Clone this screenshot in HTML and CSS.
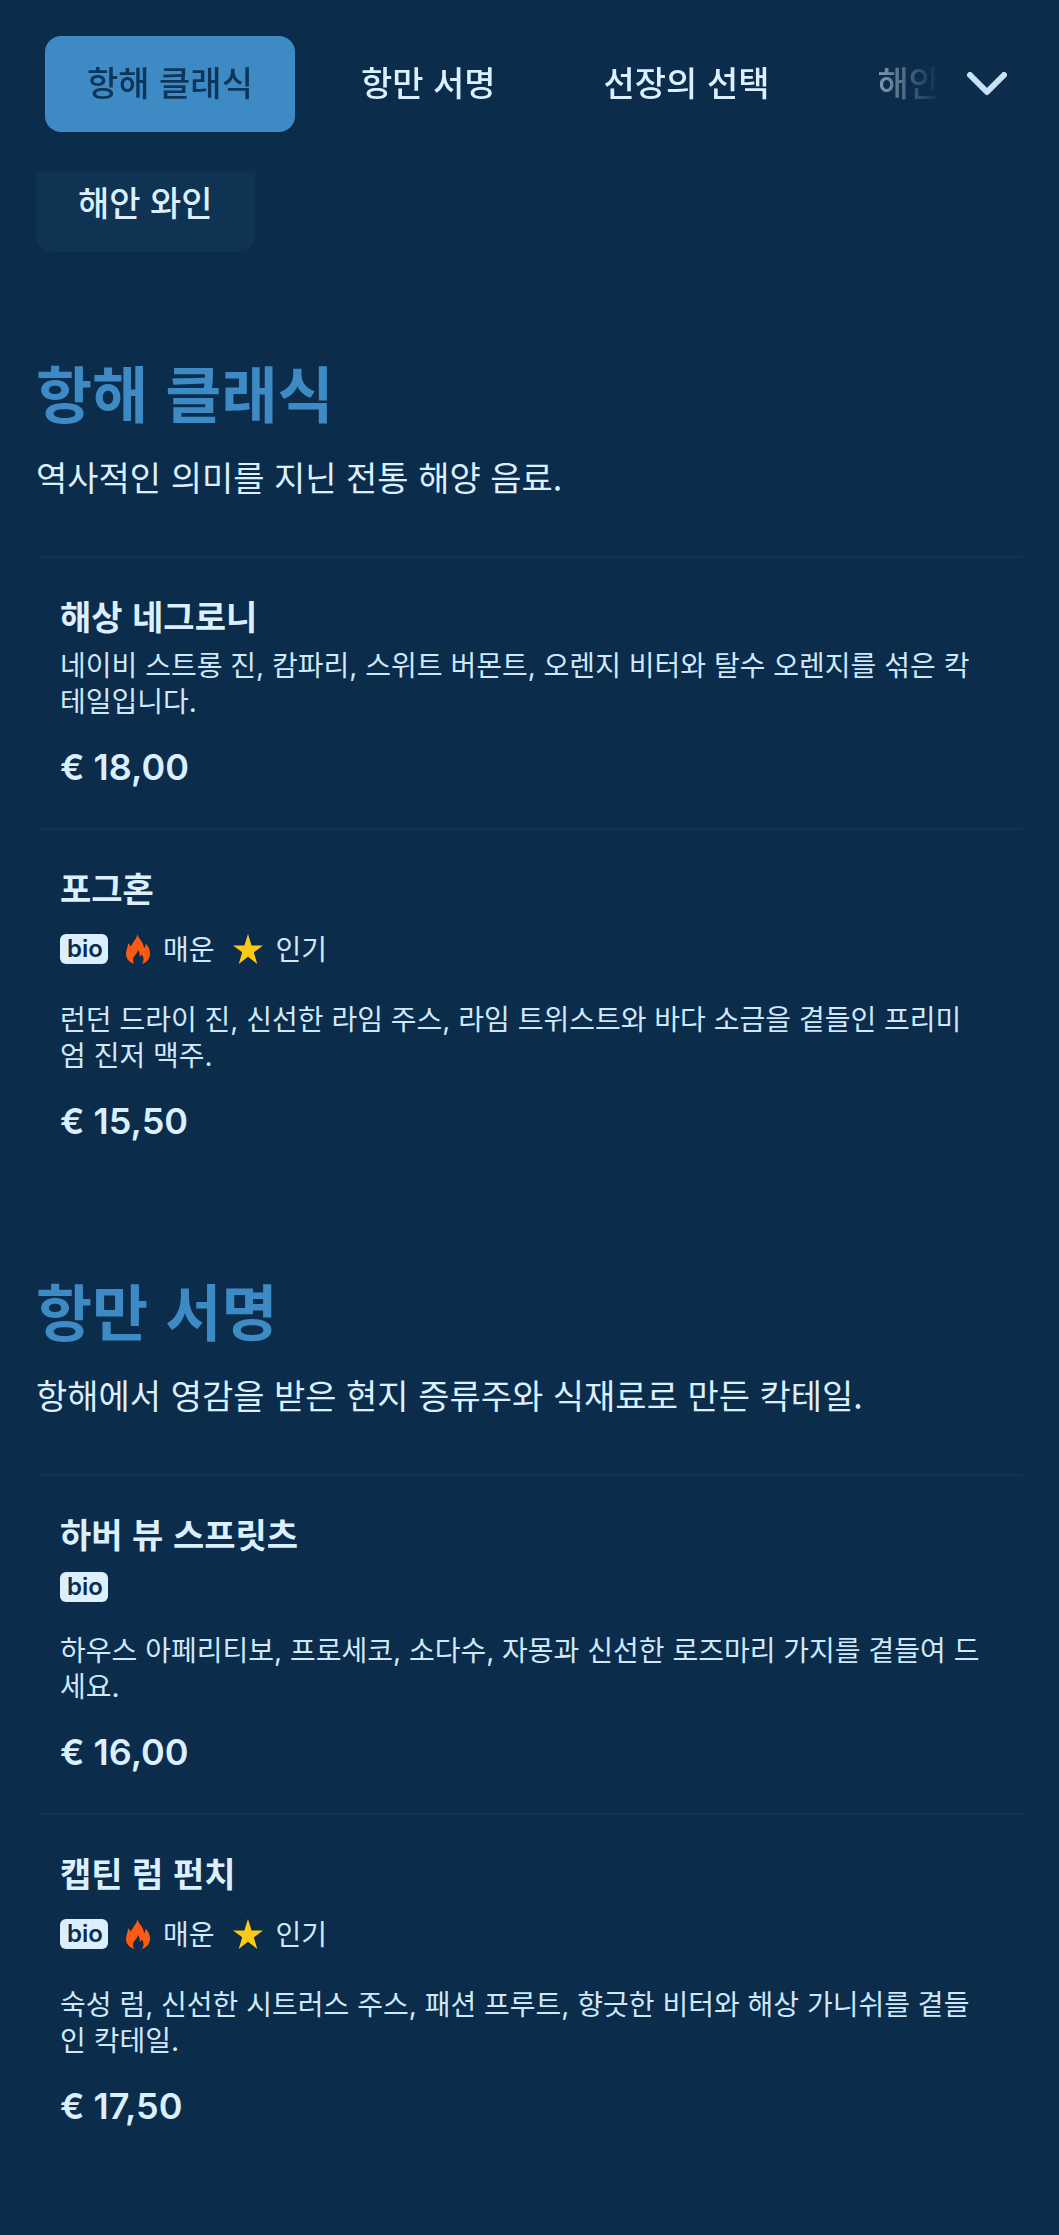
FILE: index.html
```
<!DOCTYPE html>
<html lang="ko">
<head>
    <meta charset="UTF-8">
    <meta name="viewport" content="width=device-width, initial-scale=1.0">
    <title>음료 메뉴</title>
    <link rel="stylesheet" href="styles.css">
</head>
<body>

    <!-- Icons used by the labels -->
    <svg class="sprite" aria-hidden="true">
        <symbol id="fire" viewBox="0 0 24 30">
            <path d="M11.5 0C12.5 5 17.5 7.5 18 14C19.3 13.2 19.8 11.3 19.6 9.5C22.5 12.5 24 16 24 19.5C24 24.5 21 28.5 16 30C18.3 26.5 18 23 15.5 20.5C15 22 14.5 22.6 13.6 22.8C14 20.5 13.5 18 12 16C11.5 20 7 22 7 25.5C7 27.5 7.5 29 8.5 30C3.5 28.5 0 25 0 20C0 16 2 13.5 2 9.5C3.6 10.5 4.5 11.5 4.8 13C6 8.5 10.5 6 11.5 0Z"/>
        </symbol>
        <symbol id="star" viewBox="0 0 30 30">
            <path d="M15 0L18.6 11.4L30 11.4L20.8 18.3L24.3 30L15 22.8L5.7 30L9.2 18.3L0 11.4L11.4 11.4Z"/>
        </symbol>
    </svg>

    <header class="header">
        <nav class="tabs">
            <a class="tab active" href="#classics">항해 클래식</a>
            <a class="tab" href="#signatures">항만 서명</a>
            <a class="tab" href="#captain">선장의 선택</a>
            <a class="tab" href="#wines">해안 와인</a>
        </nav>
        <button class="toggle" type="button" aria-label="모든 카테고리">
            <svg class="chevron" viewBox="0 0 40 24"><path d="M3 3L20 20L37 3"/></svg>
        </button>
    </header>

    <main class="menu">
        <div class="categories">
            <a class="category" href="#wines">해안 와인</a>
        </div>

        <section class="section" id="classics">
            <h2>항해 클래식</h2>
            <p class="intro">역사적인 의미를 지닌 전통 해양 음료.</p>

            <article class="item">
                <h3>해상 네그로니</h3>
                <p class="description">네이비 스트롱 진, 캄파리, 스위트 버몬트, 오렌지 비터와 탈수 오렌지를 섞은 칵테일입니다.</p>
                <p class="price">€ 18,00</p>
            </article>

            <article class="item">
                <h3>포그혼</h3>
                <div class="labels">
                    <span class="bio">bio</span>
                    <span class="label"><svg class="fire"><use href="#fire"/></svg>매운</span>
                    <span class="label"><svg class="star"><use href="#star"/></svg>인기</span>
                </div>
                <p class="description">런던 드라이 진, 신선한 라임 주스, 라임 트위스트와 바다 소금을 곁들인 프리미엄 진저 맥주.</p>
                <p class="price">€ 15,50</p>
            </article>
        </section>

        <section class="section" id="signatures">
            <h2>항만 서명</h2>
            <p class="intro">항해에서 영감을 받은 현지 증류주와 식재료로 만든 칵테일.</p>

            <article class="item">
                <h3>하버 뷰 스프릿츠</h3>
                <div class="labels">
                    <span class="bio">bio</span>
                </div>
                <p class="description">하우스 아페리티보, 프로세코, 소다수, 자몽과 신선한 로즈마리 가지를 곁들여 드세요.</p>
                <p class="price">€ 16,00</p>
            </article>

            <article class="item">
                <h3>캡틴 럼 펀치</h3>
                <div class="labels">
                    <span class="bio">bio</span>
                    <span class="label"><svg class="fire"><use href="#fire"/></svg>매운</span>
                    <span class="label"><svg class="star"><use href="#star"/></svg>인기</span>
                </div>
                <p class="description">숙성 럼, 신선한 시트러스 주스, 패션 프루트, 향긋한 비터와 해상 가니쉬를 곁들인 칵테일.</p>
                <p class="price">€ 17,50</p>
            </article>
        </section>
    </main>
</body>
</html>
```
FILE: styles.css
```
* {
    box-sizing: border-box;
}

body {
    margin: 0;
    background-color: #0b2c4a;
    color: #dbefff;
    font-family: "Noto Sans CJK KR", sans-serif;
}

h2,
h3,
p {
    margin: 0;
}

a {
    color: inherit;
    text-decoration: none;
}

.sprite {
    display: none;
}

/* Sticky category bar */
.header {
    position: sticky;
    top: 0;
    z-index: 1;
    display: flex;
    align-items: flex-start;
    padding: 36px 45px 38px;
    background-color: #0b2c4a;
    border-bottom: 2px solid #0e304f;
}

.tabs {
    display: flex;
    flex: 1;
    gap: 24px;
    min-width: 0;
    overflow: hidden;
    -webkit-mask-image: linear-gradient(to right, #000 calc(100% - 110px), transparent);
    mask-image: linear-gradient(to right, #000 calc(100% - 110px), transparent);
}

.tab,
.category {
    flex: none;
    padding: 21px 42px 25px;
    border-radius: 16px;
    font-size: 34px;
    font-weight: 500;
    line-height: 50px;
}

.tab.active {
    background-color: #3d8ac5;
    color: #0b3659;
}

.toggle {
    display: flex;
    align-items: center;
    height: 96px;
    margin-left: 20px;
    padding: 0 7px;
    border: none;
    background: none;
    cursor: pointer;
}

.chevron {
    width: 40px;
    height: 24px;
    fill: none;
    stroke: #c9e2f8;
    stroke-width: 6;
    stroke-linecap: round;
    stroke-linejoin: round;
}

.menu {
    padding: 0 36px 68px;
}

/* The row is partly scrolled under the header */
.categories {
    display: flex;
    margin-top: -16px;
    margin-bottom: 98px;
}

.category {
    background-color: #0f3353;
}

.section + .section {
    margin-top: 86px;
}

h2 {
    margin-bottom: 18px;
    color: #3d8ac5;
    font-size: 61px;
    font-weight: 700;
    line-height: 84px;
}

.intro {
    margin-bottom: 54px;
    font-size: 34px;
    line-height: 50px;
}

.item {
    padding: 33px 38px 38px 24px;
    border-top: 2px solid #12334f;
}

h3 {
    font-size: 34px;
    font-weight: 700;
    line-height: 50px;
}

.labels {
    display: flex;
    align-items: center;
    gap: 18px;
    margin-top: 13px;
    margin-bottom: 31px;
}

.bio {
    width: 48px;
    padding-left: 2px;
    border-radius: 6px;
    background-color: #dbefff;
    color: #0b2c4a;
    font-family: Inter, sans-serif;
    font-size: 24px;
    font-weight: 600;
    line-height: 30px;
    text-align: center;
}

.label {
    display: flex;
    align-items: center;
    gap: 13px;
    font-size: 28px;
    line-height: 45px;
    color: #cfe8fb;
}

.fire {
    width: 24px;
    height: 30px;
    fill: #ff5a14;
}

.star {
    width: 30px;
    height: 30px;
    fill: #ffc917;
}

.description {
    margin-top: 7px;
    color: #cfe8fb;
    font-family: Inter, "Noto Sans CJK KR", sans-serif;
    font-size: 28px;
    line-height: 36px;
}

.price {
    margin-top: 24px;
    font-family: Inter, sans-serif;
    font-size: 36px;
    font-weight: 600;
    line-height: 46px;
}
```
